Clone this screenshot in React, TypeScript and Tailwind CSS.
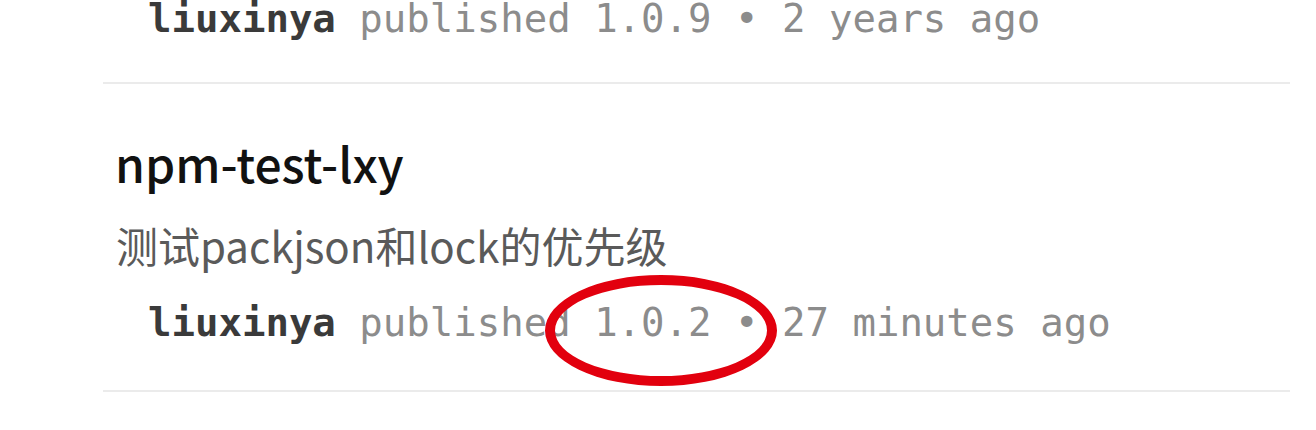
import React from "react";

const mono = { fontFamily: '"DejaVu Sans Mono", "Liberation Mono", monospace' };

function Meta({ version, ago }: { version: string; ago: string }) {
  return (
    <div className="pl-[45px] text-[39px] leading-[44px] whitespace-nowrap" style={mono}>
      <span className="font-bold text-[#3a3a3a]">liuxinya</span>
      <span className="text-[#8c8c8c]"> published {version} • {ago}</span>
    </div>
  );
}

export default function App() {
  return (
    <div className="relative w-[1316px] h-[430px] overflow-hidden bg-white">
      <div className="ml-[103px] w-[1187px]">
        <div className="-mt-[3px] pb-[41px] border-b-2 border-[#ebebeb]">
          <Meta version="1.0.9" ago="2 years ago" />
        </div>
        <div className="pt-[50px] pb-[45px] border-b-2 border-[#ebebeb]">
          <div
            className="pl-[12px] text-[48px] leading-[56px] font-medium text-[#111]"
            style={{ fontFamily: '"Noto Sans CJK SC", "Noto Sans", sans-serif' }}
          >
            npm-test-lxy
          </div>
          <div
            className="pl-[13px] mt-[28px] text-[42px] leading-[54px] text-[#5a5a5a]"
            style={{ fontFamily: '"Noto Sans CJK SC", "Noto Sans", sans-serif' }}
          >
            测试packjson和lock的优先级
          </div>
          <div className="mt-[29px]">
            <Meta version="1.0.2" ago="27 minutes ago" />
          </div>
        </div>
      </div>
      <div className="absolute left-[545px] top-[275px] w-[232px] h-[111px] rounded-[50%] border-[10px] border-[#e2000e]" />
    </div>
  );
}
